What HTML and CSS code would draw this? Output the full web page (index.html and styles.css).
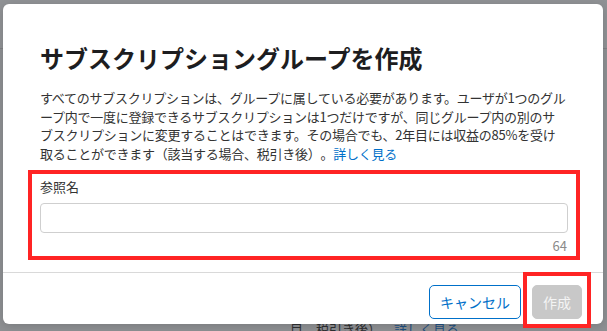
FILE: index.html
```html
<!DOCTYPE html>
<html lang="ja">
<head>
  <meta charset="UTF-8">
  <meta name="viewport" content="width=device-width, initial-scale=1.0">
  <title>サブスクリプショングループを作成</title>
  <link rel="stylesheet" href="styles.css">
</head>
<body>
  <div class="page">
    <div class="page-header"></div>
    <div class="page-body">
      <p class="page-text">目、税引き後）。<a href="#">詳しく見る</a></p>
    </div>
  </div>

  <div class="overlay">
    <div class="modal">
      <div class="modal-body">
        <h1>サブスクリプショングループを作成</h1>
        <p class="intro">すべてのサブスクリプションは、グループに属している必要があります。ユーザが1つのグル<br>ープ内で一度に登録できるサブスクリプションは1つだけですが、同じグループ内の別のサ<br>ブスクリプションに変更することはできます。その場合でも、2年目には収益の85%を受け<br>取ることができます（該当する場合、税引き後）。<a href="#">詳しく見る</a></p>
        <div class="field highlight">
          <label for="ref-name">参照名</label>
          <input id="ref-name" type="text">
          <div class="counter">64</div>
        </div>
      </div>
      <div class="modal-footer">
        <button class="btn btn-cancel">キャンセル</button>
        <span class="highlight highlight-btn">
          <button class="btn btn-create" disabled>作成</button>
        </span>
      </div>
    </div>
  </div>
</body>
</html>
```

FILE: styles.css
```css
html, body {
  margin: 0;
  height: 100%;
  font-family: "Noto Sans CJK JP", "Noto Sans", sans-serif;
  text-spacing-trim: space-all;
}
body {
  background: #8e9093;
  position: relative;
  overflow: hidden;
}
.page-header {
  height: 48px;
  border-bottom: 1px solid #7f8184;
  background: #909295;
}
.page-body {
  padding: 271px 0 0 290px;
}
.page-text {
  margin: 0;
  font-size: 13px;
  line-height: 18px;
  color: #2e2f31;
  white-space: nowrap;
}
.page-text a {
  color: #1f4f80;
  text-decoration: none;
}
.overlay {
  position: absolute;
  inset: 0;
  padding: 4px 0 0 3px;
}
.modal {
  width: 600px;
  height: 320px;
  background: #fff;
  border-radius: 6px;
  box-shadow: 0 2px 10px rgba(0,0,0,0.15);
}
.modal-body {
  padding: 38px 35px 0 37px;
}
.modal h1 {
  margin: 0;
  font-size: 24px;
  line-height: 32px;
  font-weight: 700;
  color: #1d1d1f;
}
.intro {
  margin: 15px 0 0 0;
  font-size: 13px;
  line-height: 18.5px;
  letter-spacing: -0.25px;
  color: #333;
  white-space: nowrap;
}
.intro a {
  color: #0070c9;
  text-decoration: none;
}
.highlight {
  border: 4px solid #ff2424;
}
.field {
  margin: 7px -12px 0 -12px;
  padding: 4px 8px 2px 8px;
  display: flex;
  flex-direction: column;
}
.field label {
  font-size: 13px;
  line-height: 17px;
  color: #333;
}
.field input {
  margin-top: 8px;
  height: 30px;
  box-sizing: border-box;
  border: 1px solid #cfcfcf;
  border-radius: 4px;
  padding: 0 8px;
  font: inherit;
  outline: none;
}
.counter {
  margin-top: 5px;
  text-align: right;
  font-size: 13px;
  line-height: 16px;
  color: #8a8a8a;
  padding-right: 1px;
}
.modal-footer {
  margin-top: 12px;
  border-top: 1px solid #d9d9d9;
  padding: 12px 21px 7px 0;
  display: flex;
  justify-content: flex-end;
  align-items: flex-start;
}
.btn {
  height: 34px;
  padding: 0;
  border-radius: 5px;
  font-family: inherit;
  font-size: 14px;
  line-height: 32px;
  box-sizing: border-box;
  text-align: center;
}
.btn-cancel {
  width: 92px;
  margin-right: 11px;
  background: #fff;
  border: 1px solid #0070c9;
  color: #0070c9;
}
.btn-create {
  width: 50px;
  display: block;
  background: #c8c8c8;
  border: 1px solid #c8c8c8;
  color: #f4f4f4;
}
.highlight-btn {
  display: block;
  padding: 9px 5px 5px 5px;
  margin: -13px -9px -9px -9px;
}
```
